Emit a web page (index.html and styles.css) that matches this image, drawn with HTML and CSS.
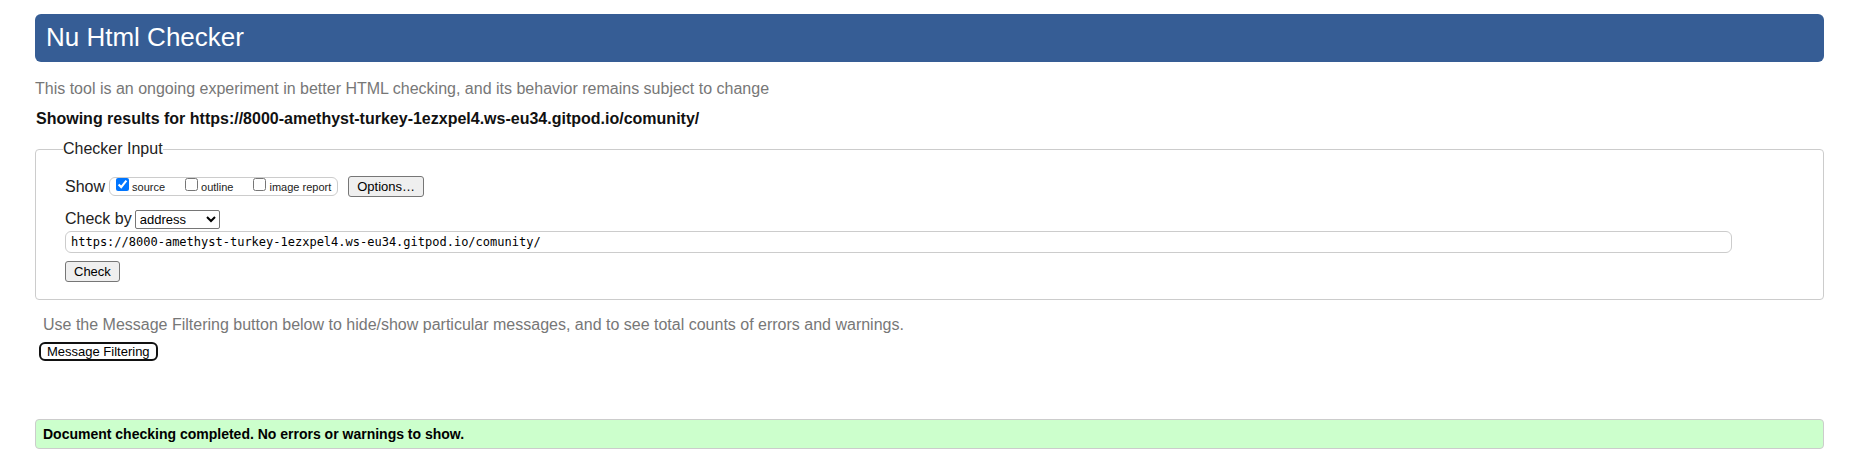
FILE: index.html
```html
<!DOCTYPE html>
<html lang="en">
<head>
<meta charset="utf-8">
<title>Nu Html Checker</title>
<link rel="stylesheet" href="styles.css">
</head>
<body>
<h1 class="banner">Nu Html Checker</h1>
<p class="note">This tool is an ongoing experiment in better HTML checking, and its behavior remains subject to change</p>
<h2 class="results-for">Showing results for https://8000-amethyst-turkey-1ezxpel4.ws-eu34.gitpod.io/comunity/</h2>
<form>
<fieldset class="checker">
<legend class="legend">Checker Input</legend>
<div class="row">
<span class="row-label">Show</span>
<div class="options">
<label class="option"><input type="checkbox" checked>source</label>
<label class="option"><input type="checkbox">outline</label>
<label class="option"><input type="checkbox">image report</label>
</div>
<button type="button" class="button options-button">Options…</button>
</div>
<div class="row check-by">
<label for="method">Check by</label>
<select id="method" class="method"><option>address</option></select>
</div>
<input class="address" type="url" aria-label="Address" value="https://8000-amethyst-turkey-1ezxpel4.ws-eu34.gitpod.io/comunity/">
<button type="button" class="button">Check</button>
</fieldset>
</form>
<section class="filtering">
<p class="filter-note">Use the Message Filtering button below to hide/show particular messages, and to see total counts of errors and warnings.</p>
<button type="button" class="filter-button">Message Filtering</button>
</section>
<p class="success">Document checking completed. No errors or warnings to show.</p>
</body>
</html>
```
FILE: styles.css
```css
* { box-sizing: border-box; }
body {
  margin: 14px 38px 0 35px;
  font: 16px/20px "Liberation Sans", Arial, sans-serif;
  color: #222;
  background: #fff;
}
.banner {
  margin: 0;
  padding: 7px 11px 9px;
  border-radius: 6px;
  background: #365d95;
  color: #fff;
  font-size: 26px;
  font-weight: 400;
  line-height: 32px;
}
.note { margin: 17px 0 10px; color: #777; }
.results-for { margin: 0 1px 10px; font-size: 16px; line-height: 20px; color: #111; }
.checker {
  display: flex;
  flex-direction: column;
  align-items: flex-start;
  margin: 0;
  padding: 17px 22px 17px 29px;
  border: 1px solid #ccc;
  border-radius: 4px;
}
.legend { margin-left: -2px; padding: 0; }
.row { display: flex; align-items: center; gap: 4px; }
.check-by { gap: 3px; margin-top: 12px; }
.options {
  display: flex;
  gap: 20px;
  height: 19px;
  padding: 0 6px;
  border: 1px solid #ccc;
  border-radius: 6px;
}
.option { display: flex; align-items: flex-start; gap: 3px; font-size: 11px; line-height: 19px; }
.option input { width: 13px; height: 13px; margin: 0; }
.button {
  height: 21px;
  padding: 0 8px;
  border: 1px solid #767676;
  border-radius: 3px;
  background: #efefef;
  color: #000;
  font: 13px/19px "Liberation Sans", Arial, sans-serif;
}
.options-button { margin-left: 6px; }
.method {
  width: 85px;
  height: 19px;
  border: 1px solid #767676;
  border-radius: 2px;
  background: #fff;
  color: #000;
  font: 13px "Liberation Sans", Arial, sans-serif;
}
.address {
  width: 96%;
  height: 22px;
  margin: 2px 0 8px;
  padding: 1px 5px;
  border: 1px solid #ccc;
  border-radius: 6px;
  color: #000;
  font: 12px "DejaVu Sans Mono", monospace;
}
.filtering { display: flex; flex-direction: column; align-items: flex-start; padding: 15px 4px 0; }
.filter-note { margin: 0 4px 7px; color: #777; }
.filter-button {
  height: 19px;
  padding: 0 6px;
  border: 2px solid #111;
  border-radius: 6px;
  background: #fff;
  color: #000;
  font: 13px/15px "Liberation Sans", Arial, sans-serif;
}
.success {
  margin: 58px 0 0;
  padding: 4px 7px;
  border: 1px solid #ccc;
  border-radius: 4px;
  background: #cfc;
  color: #000;
  font-size: 14px;
  font-weight: 700;
}
```
